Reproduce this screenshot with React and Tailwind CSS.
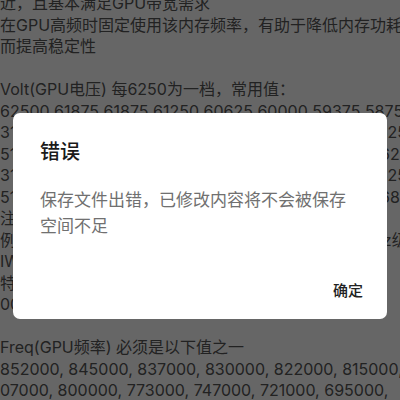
// App.jsx
// Editor de texto de fondo con un diálogo de error encima.

const lines = [
  '近，且基本满足GPU带宽需求',
  '在GPU高频时固定使用该内存频率，有助于降低内存功耗，从',
  '而提高稳定性',
  '',
  'Volt(GPU电压) 每6250为一档，常用值：',
  '62500 61875 61875 61250 60625 60000 59375 58750',
  '31250 30625 30000 29375 28750 28125 27500 26250',
  '51250 50625 50000 49375 48750 48125 47500 46250 0',
  '31250 30625 30000 29375 28750 28125 27500 26250',
  '51250 50625 50000 49375 48750 48125 47500 46875',
  '注意：电压过低可能导致GPU不稳定',
  '例如：频率在某些频段下可以使用更低电压 单位为MHz级',
  'IW 该值为0时表示自动',
  '特殊值',
  '00',
  '',
  'Freq(GPU频率) 必须是以下值之一',
  '852000, 845000, 837000, 830000, 822000, 815000,',
  '07000, 800000, 773000, 747000, 721000, 695000,',
];

const fontStack = { fontFamily: 'Inter, "Noto Sans CJK SC", sans-serif' };

export default function App() {
  return (
    <div className="relative w-[400px] h-[400px] overflow-hidden bg-white" style={fontStack}>
      {/* Background text */}
      <div className="mt-[-7px] text-[16px] leading-[21.5px] text-[#555] whitespace-pre">
        {lines.map((l, i) => (
          <div key={i} className="h-[21.5px]">{l}</div>
        ))}
      </div>

      {/* Dim overlay */}
      <div className="absolute inset-0 bg-black/60" />

      {/* Dialog */}
      <div className="absolute left-[13px] top-[113px] w-[374px] h-[206px] bg-white rounded-[7px] flex flex-col">
        <div className="pl-[27px] pt-[25px] text-[20px] leading-[28px] font-medium text-[#1a1a1a]">
          错误
        </div>
        <div className="pl-[27px] mt-[21px] text-[17px] leading-[26px] text-[#707070]">
          保存文件出错，已修改内容将不会被保存
          <br />
          空间不足
        </div>
        <div className="mt-auto flex justify-end pr-[24px] pb-[17px]">
          <button className="text-[15px] leading-[22px] font-medium text-[#222]">确定</button>
        </div>
      </div>
    </div>
  );
}
